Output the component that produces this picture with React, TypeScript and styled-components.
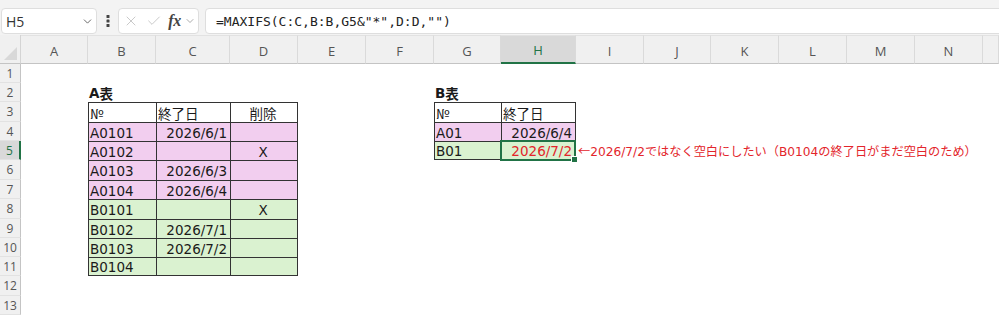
import React from 'react';
import styled, { createGlobalStyle } from 'styled-components';
import { ChevronDown, X, Check } from 'lucide-react';

const GlobalStyle = createGlobalStyle`
  html, body {
    margin: 0;
    padding: 0;
    background: #fff;
    overflow: hidden;
  }
  body {
    width: 999px;
    height: 315px;
  }
`;

const COLUMNS = [
  { key: 'A', w: 67 },
  { key: 'B', w: 68 },
  { key: 'C', w: 74 },
  { key: 'D', w: 68 },
  { key: 'E', w: 68 },
  { key: 'F', w: 68 },
  { key: 'G', w: 67 },
  { key: 'H', w: 75 },
  { key: 'I', w: 68 },
  { key: 'J', w: 67 },
  { key: 'K', w: 68 },
  { key: 'L', w: 68 },
  { key: 'M', w: 68 },
  { key: 'N', w: 68 },
  { key: 'O', w: 16, hidden: true },
];

const ROW_HEIGHTS = [19, 19, 20, 19, 19, 20, 19, 20, 19, 19, 19, 20, 19];

const PINK = '#f2ceef';
const GREEN = '#daf2d0';
const RED = '#e3252b';

type Align = 'left' | 'center' | 'right';

interface ICell {
  text: React.ReactNode;
  align?: Align;
  fill?: string;
  color?: string;
  bold?: boolean;
  note?: boolean;
}

// tables on the sheet: [firstCol, lastCol, firstRow, lastRow], A = 1
const TABLES: [number, number, number, number][] = [
  [2, 4, 3, 11],
  [7, 8, 3, 5],
];

const Jp = styled.span`
  font-family: 'Noto Sans CJK JP', sans-serif;
`;

const CELLS: Record<string, ICell> = {
  B2: { text: <>A<Jp>表</Jp></>, bold: true },
  B3: { text: <Jp>№</Jp> },
  C3: { text: <Jp>終了日</Jp> },
  D3: { text: <Jp>削除</Jp>, align: 'center' },
  B4: { text: 'A0101', fill: PINK },
  C4: { text: '2026/6/1', align: 'right', fill: PINK },
  D4: { text: '', fill: PINK },
  B5: { text: 'A0102', fill: PINK },
  C5: { text: '', fill: PINK },
  D5: { text: 'X', align: 'center', fill: PINK },
  B6: { text: 'A0103', fill: PINK },
  C6: { text: '2026/6/3', align: 'right', fill: PINK },
  D6: { text: '', fill: PINK },
  B7: { text: 'A0104', fill: PINK },
  C7: { text: '2026/6/4', align: 'right', fill: PINK },
  D7: { text: '', fill: PINK },
  B8: { text: 'B0101', fill: GREEN },
  C8: { text: '', fill: GREEN },
  D8: { text: 'X', align: 'center', fill: GREEN },
  B9: { text: 'B0102', fill: GREEN },
  C9: { text: '2026/7/1', align: 'right', fill: GREEN },
  D9: { text: '', fill: GREEN },
  B10: { text: 'B0103', fill: GREEN },
  C10: { text: '2026/7/2', align: 'right', fill: GREEN },
  D10: { text: '', fill: GREEN },
  B11: { text: 'B0104', fill: GREEN },
  C11: { text: '', fill: GREEN },
  D11: { text: '', fill: GREEN },
  G2: { text: <>B<Jp>表</Jp></>, bold: true },
  G3: { text: <Jp>№</Jp> },
  H3: { text: <Jp>終了日</Jp> },
  G4: { text: 'A01', fill: PINK },
  H4: { text: '2026/6/4', align: 'right', fill: PINK },
  G5: { text: 'B01', fill: GREEN },
  H5: { text: '2026/7/2', align: 'right', fill: GREEN, color: RED },
  I5: {
    text: (
      <>
        <Jp>←</Jp>2026/7/2ではなく空白にしたい（B0104の終了日がまだ空白のため）
      </>
    ),
    color: RED,
    note: true,
  },
};

const SELECTED = { col: 8, row: 5 };

/* ---------- toolbar ---------- */

const Toolbar = styled.div`
  display: flex;
  align-items: stretch;
  height: 26px;
  padding: 8px 0 1px 1px;
  background: #f3f3f3;
  border-top: 1px solid #e4e4e4;
  box-sizing: content-box;
  margin-top: -1px;
  overflow: hidden;
`;

const Box = styled.div<{ $w?: number }>`
  display: flex;
  align-items: center;
  box-sizing: border-box;
  background: #fff;
  border: 1px solid #dedede;
  border-radius: 4px;
  ${(p) => (p.$w ? `width: ${p.$w}px; flex: none;` : 'flex: 1; margin-right: -6px;')}
`;

const NameText = styled.span`
  flex: 1;
  padding-left: 4px;
  font-family: 'Open Sans', 'Noto Sans', sans-serif;
  font-size: 14px;
  color: #333;
`;

const DotsSlot = styled.div<{ $w: number }>`
  width: ${(p) => p.$w}px;
  flex: none;
  display: flex;
  align-items: center;
  justify-content: center;
`;

const FuncBtn = styled.span<{ $w: number }>`
  width: ${(p) => p.$w}px;
  display: flex;
  align-items: center;
  justify-content: center;
  color: #b5b5b5;
`;

const Fx = styled.span`
  font-family: 'Liberation Serif', serif;
  font-style: italic;
  font-weight: bold;
  font-size: 16px;
  color: #444;
  letter-spacing: -0.5px;
`;

const Formula = styled.span`
  padding-left: 10px;
  font-family: 'DejaVu Sans Mono', monospace;
  font-size: 13px;
  color: #222;
  white-space: pre;
`;

/* ---------- sheet ---------- */

const Sheet = styled.div`
  display: grid;
  grid-template-columns: 21px ${COLUMNS.map((c) => `${c.w}px`).join(' ')};
  grid-template-rows: 29px ${ROW_HEIGHTS.map((h) => `${h}px`).join(' ')};
  background: #fff;
  overflow: hidden;
`;

const Corner = styled.div`
  position: relative;
  background: #f0f0f0;
  border-bottom: 1px solid #c4c4c4;
  border-right: 1px solid #d4d4d4;
  box-sizing: border-box;
  &::after {
    content: '';
    position: absolute;
    right: 3px;
    bottom: 3px;
    width: 13px;
    height: 13px;
    background: #d8d8d8;
    clip-path: polygon(100% 0, 100% 100%, 0 100%);
  }
`;

const ColHead = styled.div<{ $sel?: boolean }>`
  display: flex;
  align-items: center;
  justify-content: center;
  box-sizing: border-box;
  padding-top: 2px;
  background: ${(p) => (p.$sel ? '#d9d9d9' : '#f0f0f0')};
  border-top: 1px solid #e2e2e2;
  border-right: 1px solid #dadada;
  border-bottom: ${(p) => (p.$sel ? '2px solid #217346' : '1px solid #c4c4c4')};
  font-family: 'Open Sans', 'Noto Sans', sans-serif;
  font-size: 13px;
  color: ${(p) => (p.$sel ? '#217346' : '#555')};
`;

const RowHead = styled.div<{ $sel?: boolean }>`
  display: flex;
  align-items: center;
  justify-content: center;
  box-sizing: border-box;
  background: ${(p) => (p.$sel ? '#d9d9d9' : '#f0f0f0')};
  border-right: ${(p) => (p.$sel ? '2px solid #217346' : '1px solid #c4c4c4')};
  border-bottom: 1px solid #e2e2e2;
  font-family: 'Open Sans', 'Noto Sans', sans-serif;
  font-size: 12px;
  color: ${(p) => (p.$sel ? '#217346' : '#555')};
`;

const Cell = styled.div<{
  $align: Align;
  $fill?: string;
  $color?: string;
  $bold?: boolean;
  $bt?: boolean;
  $bl?: boolean;
  $br?: boolean;
  $bb?: boolean;
  $note?: boolean;
}>`
  position: relative;
  display: flex;
  align-items: center;
  justify-content: ${(p) => (p.$align === 'right' ? 'flex-end' : p.$align === 'center' ? 'center' : 'flex-start')};
  box-sizing: border-box;
  padding: 1px 3px 0 1px;
  min-width: 0;
  background: ${(p) => p.$fill || 'transparent'};
  border-top: ${(p) => (p.$bt ? '1px solid #333' : 'none')};
  border-left: ${(p) => (p.$bl ? '1px solid #333' : 'none')};
  border-right: ${(p) => (p.$br ? '1px solid #333' : 'none')};
  border-bottom: ${(p) => (p.$bb ? '1px solid #333' : 'none')};
  font-family: 'DejaVu Sans', 'Noto Sans CJK JP', sans-serif;
  font-size: 13.5px;
  font-weight: ${(p) => (p.$bold ? 'bold' : 'normal')};
  color: ${(p) => p.$color || '#1a1a1a'};
  white-space: nowrap;
  overflow: visible;
  z-index: ${(p) => (p.$note ? 2 : 'auto')};
`;

const Note = styled.span`
  padding-left: 1px;
  font-family: 'DejaVu Sans', 'Noto Sans CJK JP', sans-serif;
  font-size: 12.2px;
`;

const Selection = styled.div`
  position: absolute;
  top: -2px;
  left: -2px;
  right: -1px;
  bottom: -2px;
  border: 2px solid #217346;
  pointer-events: none;
  &::after {
    content: '';
    position: absolute;
    right: -4px;
    bottom: -4px;
    width: 5px;
    height: 5px;
    background: #217346;
    border: 1px solid #fff;
  }
`;

const Dots = () => (
  <svg width="4" height="12" viewBox="0 0 4 12">
    <rect x="0.5" y="0" width="3" height="3" rx="0.6" fill="#444" />
    <rect x="0.5" y="4.5" width="3" height="3" rx="0.6" fill="#444" />
    <rect x="0.5" y="9" width="3" height="3" rx="0.6" fill="#444" />
  </svg>
);

const borderFor = (c: number, r: number) => {
  for (const [c0, c1, r0, r1] of TABLES) {
    if (c >= c0 && c <= c1 && r >= r0 && r <= r1) {
      return { bt: true, bl: true, br: c === c1, bb: r === r1 };
    }
  }
  return { bt: false, bl: false, br: false, bb: false };
};

const App = () => {
  return (
    <>
      <GlobalStyle />
      <Toolbar>
        <Box $w={96}>
          <NameText>H5</NameText>
          <FuncBtn $w={18}>
            <ChevronDown size={13} strokeWidth={1.6} color="#555" />
          </FuncBtn>
        </Box>
        <DotsSlot $w={21}>
          <Dots />
        </DotsSlot>
        <Box $w={81}>
          <FuncBtn $w={24}>
            <X size={16} strokeWidth={1.1} />
          </FuncBtn>
          <FuncBtn $w={22}>
            <Check size={16} strokeWidth={1.1} />
          </FuncBtn>
          <FuncBtn $w={19}>
            <Fx>fx</Fx>
          </FuncBtn>
          <FuncBtn $w={12}>
            <ChevronDown size={12} strokeWidth={1.4} color="#888" />
          </FuncBtn>
        </Box>
        <DotsSlot $w={6} />
        <Box>
          <Formula>=MAXIFS(C:C,B:B,G5&amp;"*",D:D,"")</Formula>
        </Box>
      </Toolbar>
      <Sheet>
        <Corner />
        {COLUMNS.map((c, i) => (
          <ColHead key={c.key} $sel={i + 1 === SELECTED.col}>
            {c.hidden ? '' : c.key}
          </ColHead>
        ))}
        {ROW_HEIGHTS.map((_, ri) => {
          const r = ri + 1;
          return (
            <React.Fragment key={r}>
              <RowHead $sel={r === SELECTED.row}>{r}</RowHead>
              {COLUMNS.map((col, ci) => {
                const c = ci + 1;
                const spec = CELLS[`${col.key}${r}`];
                const b = borderFor(c, r);
                const selected = c === SELECTED.col && r === SELECTED.row;
                return (
                  <Cell
                    key={col.key}
                    $align={spec?.align || 'left'}
                    $fill={spec?.fill}
                    $color={spec?.color}
                    $bold={spec?.bold}
                    $note={spec?.note}
                    $bt={b.bt}
                    $bl={b.bl}
                    $br={b.br}
                    $bb={b.bb}
                  >
                    {spec?.note ? <Note>{spec.text}</Note> : spec?.text}
                    {selected && <Selection />}
                  </Cell>
                );
              })}
            </React.Fragment>
          );
        })}
      </Sheet>
    </>
  );
};

export default App;
